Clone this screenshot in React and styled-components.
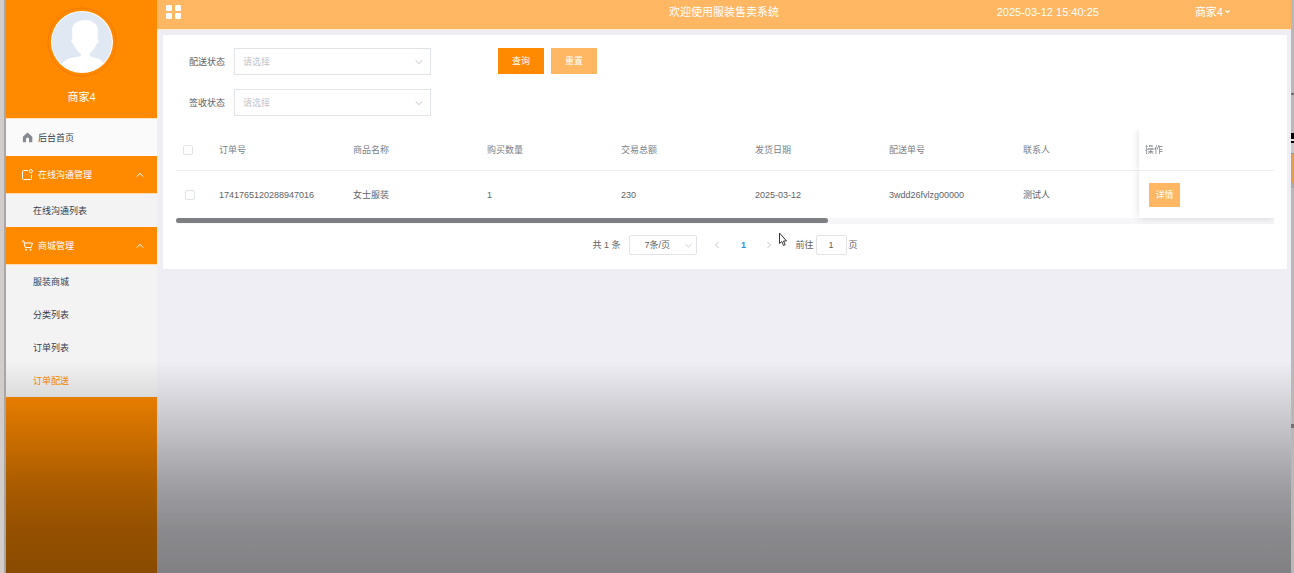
import { useState } from "react";
import styled, { createGlobalStyle, ThemeProvider } from "styled-components";

const theme = {
  colors: {
    primary: "#ff8a00",
    primaryLight: "#ffb763",
    pageBg: "#eeeef4",
    menuBg: "#fafafa",
    subMenuBg: "#f3f3f3",
    menuText: "#34404f",
    text: "#606266",
    heading: "#7b7f87",
    placeholder: "#c0c4cc",
    border: "#e1e3e8",
    line: "#ebeef2",
    active: "#2f8de4",
  },
  size: {
    sm: "9px",
    md: "11px",
  },
};

const GlobalStyle = createGlobalStyle`
  * {
    box-sizing: border-box;
  }
  body {
    margin: 0;
    font-family: "Liberation Sans", "Noto Sans CJK SC", sans-serif;
    font-size: ${theme.size.sm};
    line-height: 14px;
    color: ${theme.colors.text};
  }
  button, input, select {
    font: inherit;
    color: inherit;
    margin: 0;
  }
  a {
    color: inherit;
    text-decoration: none;
  }
  ul {
    list-style: none;
    margin: 0;
    padding: 0;
  }
`;

const Desktop = styled.div`
  position: relative;
  display: flex;
  min-height: 100vh;
`;

const LeftEdge = styled.div`
  flex: 0 0 6px;
  background: linear-gradient(to right, #d2cdca 4px, #aaa6a5 4px);
`;

// sliver of the window lying behind this one
const RightEdge = styled.div`
  flex: 0 0 3px;
  background: linear-gradient(
    #b8b8b8 93px,
    #6e6e6e 93px 95px,
    #b8b8b8 95px 133px,
    #000 133px 139px,
    #ddd 139px 141px,
    #000 141px 143px,
    #c8c8c8 143px 153px,
    #7f9cad 153px 154px,
    #e09d52 154px 183px,
    #aaa 183px 188px,
    #b8b8b8 188px 424px,
    #707070 424px 428px,
    #b8b8b8 428px
  );
`;

const BottomShade = styled.div`
  position: absolute;
  left: 6px;
  right: 3px;
  bottom: 0;
  height: 213px;
  pointer-events: none;
  background: linear-gradient(
    rgba(0, 0, 0, 0),
    rgba(0, 0, 0, 0.1) 18%,
    rgba(0, 0, 0, 0.33) 58%,
    rgba(0, 0, 0, 0.42) 80%,
    rgba(0, 0, 0, 0.46)
  );
`;

const Sidebar = styled.aside`
  flex: 0 0 151px;
  background: ${({ theme }) => theme.colors.primary};
`;

const Profile = styled.div`
  display: flex;
  flex-direction: column;
  align-items: center;
  gap: 13px;
  height: 118px;
  padding-top: 7px;
  color: #fff;
  font-size: ${({ theme }) => theme.size.md};
`;

const Avatar = styled.svg`
  flex: none;
  width: 70px;
  height: 70px;
`;

const MenuLink = styled.a`
  display: flex;
  align-items: center;
  gap: 5px;
  height: 38px;
  padding: 0 13px 0 16px;
  border-top: 1px solid #ffe3c0;
  background: ${({ theme }) => theme.colors.menuBg};
  color: ${({ theme }) => theme.colors.menuText};
`;

const MenuGroup = styled.button`
  display: flex;
  align-items: center;
  gap: 5px;
  width: 100%;
  height: 37px;
  padding: 0 13px 0 16px;
  border: 0;
  background: ${({ theme }) => theme.colors.primary};
  color: #fff;
  span {
    flex: 1;
    text-align: left;
  }
`;

const SubMenu = styled.ul`
  border-top: 1px solid #ffdcae;
  background: ${({ theme }) => theme.colors.subMenuBg};
`;

const SubLink = styled.a`
  display: flex;
  align-items: center;
  height: 33px;
  padding-left: 27px;
  color: ${({ theme, $active }) =>
    $active ? theme.colors.primary : theme.colors.menuText};
`;

const Icon = styled.svg`
  flex: none;
  width: ${({ $size }) => $size}px;
  height: ${({ $size }) => $size}px;
  fill: none;
  stroke: currentColor;
`;

const Main = styled.main`
  flex: 1;
  min-width: 0;
  background: ${({ theme }) => theme.colors.pageBg};
`;

const TopBar = styled.header`
  display: grid;
  grid-template-columns: 1fr auto 1fr;
  align-items: center;
  height: 30px;
  padding-bottom: 6px;
  border-bottom: 1px solid #ffe9d2;
  background: ${({ theme }) => theme.colors.primaryLight};
  color: #fff;
  font-size: ${({ theme }) => theme.size.md};
`;

const GridButton = styled.button`
  display: grid;
  grid-template-columns: 6px 6px;
  gap: 2px 3px;
  justify-self: start;
  margin-left: 9px;
  padding: 0;
  border: 0;
  background: none;
  i {
    height: 6px;
    border-radius: 1px;
    background: #fff;
  }
`;

const Title = styled.div`
  white-space: nowrap;
`;

const TopRight = styled.div`
  display: flex;
  justify-content: flex-end;
  align-items: center;
  gap: 96px;
  padding-right: 61px;
`;

const UserButton = styled.button`
  display: flex;
  align-items: center;
  gap: 2px;
  padding: 0;
  border: 0;
  background: none;
`;

const Card = styled.section`
  margin: 5px 4px 0 6px;
  padding: 13px 13px 14px;
  background: #fff;
`;

const Filters = styled.form`
  display: flex;
  align-items: flex-start;
  gap: 67px;
  padding-left: 13px;
`;

const Fields = styled.div`
  display: flex;
  flex-direction: column;
  gap: 14px;
`;

const Field = styled.label`
  display: flex;
  align-items: center;
  gap: 7px;
`;

const FieldName = styled.span`
  width: 38px;
`;

const SelectBox = styled.span`
  display: grid;
  align-items: center;
  width: ${({ $width }) => $width}px;
  height: ${({ $height }) => $height}px;
  border: 1px solid ${({ theme }) => theme.colors.border};
  border-radius: ${({ $round }) => ($round ? "2px" : "0")};
  color: ${({ theme }) => theme.colors.placeholder};
  > * {
    grid-area: 1 / 1;
  }
  svg {
    justify-self: end;
    margin-right: ${({ $round }) => ($round ? "4px" : "7px")};
    pointer-events: none;
  }
`;

const Select = styled.select`
  appearance: none;
  width: 100%;
  height: 100%;
  padding: 0 ${({ $pad }) => $pad}px;
  border: 0;
  background: none;
  outline: none;
  color: ${({ theme, $filled }) =>
    $filled ? theme.colors.text : theme.colors.placeholder};
`;

const Buttons = styled.div`
  display: flex;
  gap: 7px;
`;

const Button = styled.button`
  width: ${({ $small }) => ($small ? "31px" : "46px")};
  height: ${({ $small }) => ($small ? "24px" : "26px")};
  padding: 0;
  border: 0;
  background: ${({ theme, $light }) =>
    $light ? theme.colors.primaryLight : theme.colors.primary};
  color: #fff;
`;

const TableWrap = styled.div`
  margin-top: 14px;
  overflow: hidden;
`;

const Table = styled.table`
  width: 100%;
  min-width: 1110px;
  table-layout: fixed;
  border-collapse: separate;
  border-spacing: 0;
  text-align: left;
  th,
  td {
    padding: 0 6px;
    white-space: nowrap;
    background: #fff;
  }
  th {
    height: 41px;
    border-bottom: 1px solid ${({ theme }) => theme.colors.line};
    font-weight: 400;
    color: ${({ theme }) => theme.colors.heading};
  }
  td {
    height: 47px;
  }
  th:last-child,
  td:last-child {
    position: sticky;
    right: 0;
    z-index: 1;
    box-shadow: 0 0 8px rgba(0, 0, 0, 0.14);
    clip-path: inset(0 0 -8px -8px);
  }
  td:last-child {
    padding-left: 10px;
  }
`;

const Checkbox = styled.input`
  appearance: none;
  display: block;
  width: 10px;
  height: 10px;
  border: 1px solid ${({ theme }) => theme.colors.border};
  border-radius: 2px;
  background: #fff;
  &:checked {
    background: ${({ theme }) => theme.colors.primary};
  }
`;

const CheckCell = styled.div`
  padding-left: ${({ $head }) => ($head ? "1px" : "3px")};
`;

const ScrollTrack = styled.div`
  height: 6px;
  background: #f6f6f9;
`;

const ScrollThumb = styled.div`
  width: 59.4%;
  height: 5px;
  border-radius: 3px;
  background: #7e7f83;
`;

const Pagination = styled.nav`
  display: flex;
  justify-content: center;
  align-items: center;
  margin-top: 11px;
`;

const Pager = styled.div`
  display: flex;
  align-items: center;
  margin: 0 7px;
`;

const PageButton = styled.button`
  display: flex;
  justify-content: center;
  align-items: center;
  width: 26px;
  height: 20px;
  padding: 0;
  border: 0;
  background: none;
  color: ${({ theme, $current }) =>
    $current ? theme.colors.active : theme.colors.placeholder};
  font-weight: 700;
`;

const Total = styled.span`
  margin-right: 9px;
`;

const Jumper = styled.label`
  display: flex;
  align-items: center;
  gap: 2px;
  margin-left: 6px;
`;

const PageInput = styled.input`
  width: 31px;
  height: 20px;
  padding: 0;
  border: 1px solid ${({ theme }) => theme.colors.border};
  border-radius: 2px;
  text-align: center;
  outline: none;
`;

const Cursor = styled.svg`
  position: absolute;
  left: 778px;
  top: 232px;
  width: 10px;
  height: 15px;
  pointer-events: none;
`;

const Chevron = ({ d, size = 8 }) => (
  <Icon $size={size} viewBox="0 0 8 8">
    <path d={d} />
  </Icon>
);

const UP = "M.7 5.6 4 2.4 7.3 5.6";
const DOWN = "M.7 2.4 4 5.6 7.3 2.4";
const LEFT = "M5.5 1 2.500 4 5.500 7";
const RIGHT = "M2.500 1 5.500 4 2.500 7";

const HomeIcon = () => (
  <Icon $size={11} viewBox="0 0 11 11">
    <path
      d="M5.500.6 10.300 4.800V10.200H7V7a1.500 1.500 0 0 0-3 0v3.200H.9V4.800z"
      fill="#868b93"
      stroke="none"
    />
  </Icon>
);

const MessageIcon = () => (
  <Icon $size={11} viewBox="0 0 11 11">
    <path d="M6 1.500H1.500a1 1 0 0 0-1 1v7a1 1 0 0 0 1 1h7a1 1 0 0 0 1-1V5.500" />
    <circle cx="8.800" cy="2.200" r="1.600" />
  </Icon>
);

const CartIcon = () => (
  <Icon $size={11} viewBox="0 0 11 11">
    <path d="M0 1h1.800l1.400 6.500h6L10.400 3H2.300" />
    <circle cx="4" cy="9.700" r=".6" />
    <circle cx="8.600" cy="9.700" r=".6" />
  </Icon>
);

const menuGroups = [
  {
    name: "在线沟通管理",
    icon: <MessageIcon />,
    items: ["在线沟通列表"],
  },
  {
    name: "商城管理",
    icon: <CartIcon />,
    items: ["服装商城", "分类列表", "订单列表", "订单配送"],
  },
];

const columns = [
  "订单号",
  "商品名称",
  "购买数量",
  "交易总额",
  "发货日期",
  "配送单号",
  "联系人",
];

const orders = [
  [
    "1741765120288947016",
    "女士服装",
    "1",
    "230",
    "2025-03-12",
    "3wdd26fvlzg00000",
    "测试人",
  ],
];

const FilterField = ({ label }) => (
  <Field>
    <FieldName>{label}</FieldName>
    <SelectBox $width={197} $height={27}>
      <Select $pad={8} defaultValue="">
        <option value="">请选择</option>
      </Select>
      <Chevron d={DOWN} />
    </SelectBox>
  </Field>
);

const SideMenu = () => (
  <Sidebar>
    <Profile>
      <Avatar viewBox="0 0 70 70">
        <defs>
          <clipPath id="face">
            <circle cx="35" cy="35" r="30" />
          </clipPath>
        </defs>
        <circle cx="35" cy="35" r="34" fill="none" stroke="#f57a00" />
        <circle cx="35" cy="35" r="31" fill="#fff" />
        <circle cx="35" cy="35" r="30" fill="#e0e8f4" />
        <g clipPath="url(#face)" fill="#fff">
          <path d="M38 13c8 0 13 4 13 11l-.5 8c2 0 1.500 4-1 5-1.500 4-4 7.500-7 9.500h-9c-3-2-5.500-5.500-7-9.500-2.500-1-3-5-1-5L25 24c0-7 5-11 13-11z" />
          <path d="M34 44h9v4c0 2 3 2.500 6 3 6 1 9 5 11 15H12c2-10 6-14 12-15 4-.5 9-1 10-3z" />
        </g>
      </Avatar>
      商家4
    </Profile>
    <nav>
      <MenuLink href="#home">
        <HomeIcon />
        后台首页
      </MenuLink>
      {menuGroups.map((group) => (
        <div key={group.name}>
          <MenuGroup type="button">
            {group.icon}
            <span>{group.name}</span>
            <Chevron d={UP} />
          </MenuGroup>
          <SubMenu>
            {group.items.map((item) => (
              <li key={item}>
                <SubLink href="#list" $active={item === "订单配送"}>
                  {item}
                </SubLink>
              </li>
            ))}
          </SubMenu>
        </div>
      ))}
    </nav>
  </Sidebar>
);

const OrderTable = () => (
  <TableWrap>
    <Table>
      <colgroup>
        <col width="37" />
        {columns.map((name) => (
          <col key={name} width="134" />
        ))}
        <col width="135" />
      </colgroup>
      <thead>
        <tr>
          <th>
            <CheckCell $head>
              <Checkbox type="checkbox" aria-label="全选" />
            </CheckCell>
          </th>
          {columns.map((name) => (
            <th key={name}>{name}</th>
          ))}
          <th>操作</th>
        </tr>
      </thead>
      <tbody>
        {orders.map((order) => (
          <tr key={order[0]}>
            <td>
              <CheckCell>
                <Checkbox type="checkbox" aria-label={order[0]} />
              </CheckCell>
            </td>
            {order.map((value, index) => (
              <td key={columns[index]}>{value}</td>
            ))}
            <td>
              <Button type="button" $small $light>
                详情
              </Button>
            </td>
          </tr>
        ))}
      </tbody>
    </Table>
    <ScrollTrack>
      <ScrollThumb />
    </ScrollTrack>
  </TableWrap>
);

const App = () => {
  const [page, setPage] = useState("1");

  return (
    <ThemeProvider theme={theme}>
      <GlobalStyle />
      <Desktop>
        <LeftEdge />
        <SideMenu />
        <Main>
          <TopBar>
            <GridButton type="button" aria-label="菜单">
              <i />
              <i />
              <i />
              <i />
            </GridButton>
            <Title>欢迎使用服装售卖系统</Title>
            <TopRight>
              <time>2025-03-12 15:40:25</time>
              <UserButton type="button">
                商家4
                <Icon $size={5} viewBox="0 0 8 8" strokeWidth="2">
                  <path d={DOWN} />
                </Icon>
              </UserButton>
            </TopRight>
          </TopBar>
          <Card>
            <Filters>
              <Fields>
                <FilterField label="配送状态" />
                <FilterField label="签收状态" />
              </Fields>
              <Buttons>
                <Button type="button">查询</Button>
                <Button type="reset" $light>
                  重置
                </Button>
              </Buttons>
            </Filters>
            <OrderTable />
            <Pagination>
              <Total>共 1 条</Total>
              <SelectBox $width={68} $height={20} $round>
                <Select $pad={14} $filled aria-label="每页条数">
                  <option>7条/页</option>
                </Select>
                <Chevron d={DOWN} size={7} />
              </SelectBox>
              <Pager>
                <PageButton type="button" aria-label="上一页">
                  <Chevron d={LEFT} />
                </PageButton>
                <PageButton type="button" $current>
                  1
                </PageButton>
                <PageButton type="button" aria-label="下一页">
                  <Chevron d={RIGHT} />
                </PageButton>
              </Pager>
              <Jumper>
                前往
                <PageInput
                  value={page}
                  onChange={(e) => setPage(e.target.value)}
                />
                页
              </Jumper>
            </Pagination>
          </Card>
        </Main>
        <RightEdge />
        <BottomShade />
        <Cursor viewBox="0 0 10 15">
          <path
            d="M1.500 1v10.500l2.300-2 1.700 4 1.700-.8-1.700-3.700h3z"
            fill="#fff"
            stroke="#333"
          />
        </Cursor>
      </Desktop>
    </ThemeProvider>
  );
};

export default App;
